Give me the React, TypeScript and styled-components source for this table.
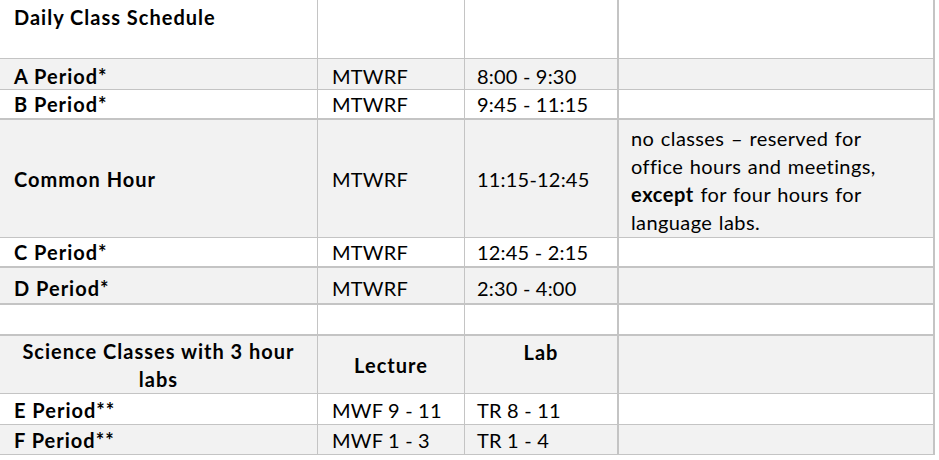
import React from "react";
import styled, { createGlobalStyle } from "styled-components";

const Global = createGlobalStyle`
  html, body { margin: 0; padding: 0; background: #ffffff; }
  body { font-family: Lato, "Open Sans", sans-serif; color: #000; }
`;

const Table = styled.table`
  border-collapse: separate;
  border-spacing: 0;
  table-layout: fixed;
  width: 935px;
  font-size: 20px;
`;

const Row = styled.tr<{ $h: number; $shade?: boolean; $bb?: number }>`
  height: ${(p) => p.$h}px;
  & > td {
    background: ${(p) => (p.$shade ? "#f2f2f2" : "#ffffff")};
    border-bottom: ${(p) => p.$bb ?? 1}px solid #c4c4c4;
  }
`;

const Cell = styled.td<{
  $col: number;
  $bold?: boolean;
  $center?: boolean;
  $valign?: "top" | "middle" | "bottom";
  $pt?: number;
  $lh?: number;
}>`
  box-sizing: border-box;
  padding: ${(p) => p.$pt ?? 0}px ${(p) => (p.$center ? 2 : 0)}px 0
    ${(p) => (p.$center ? 2 : [14, 14, 12, 12][p.$col])}px;
  border-right: ${(p) => (p.$col >= 2 ? 2 : 1)}px solid #c4c4c4;
  font-weight: ${(p) => (p.$bold ? 700 : 400)};
  letter-spacing: ${(p) => (p.$bold ? 1 : 0.2)}px;
  text-align: ${(p) => (p.$center ? "center" : "left")};
  vertical-align: ${(p) => p.$valign ?? "middle"};
  line-height: ${(p) => p.$lh ?? 24}px;
  white-space: nowrap;
`;

const Note = styled.div`
  line-height: 28px;
  letter-spacing: 0.4px;
  word-spacing: 1px;
`;

const Strong = styled.b`
  font-weight: 700;
  letter-spacing: 0.6px;
`;

type R = {
  h: number;
  shade?: boolean;
  bb?: number;
  pt?: number;
  cells: [string, string, string, string];
};

const top: R[] = [
  { h: 31, shade: true, pt: 4, cells: ["A Period*", "MTWRF", "8:00 - 9:30", ""] },
  { h: 30, bb: 2, cells: ["B Period*", "MTWRF", "9:45 - 11:15", ""] },
];

const middle: R[] = [
  { h: 30, bb: 2, cells: ["C Period*", "MTWRF", "12:45 - 2:15", ""] },
  { h: 37, shade: true, bb: 2, pt: 5, cells: ["D Period*", "MTWRF", "2:30 - 4:00", ""] },
  { h: 31, bb: 2, cells: ["", "", "", ""] },
];

const bottom: R[] = [
  { h: 31, pt: 1, cells: ["E Period**", "MWF 9 - 11", "TR 8 - 11", ""] },
  { h: 30, shade: true, cells: ["F Period**", "MWF 1 - 3", "TR 1 - 4", ""] },
];

const Plain = ({ r }: { r: R }) => (
  <Row $h={r.h} $shade={r.shade} $bb={r.bb}>
    {r.cells.map((c, i) => (
      <Cell key={i} $col={i} $bold={i === 0} $pt={r.pt}>
        {c}
      </Cell>
    ))}
  </Row>
);

export default function App() {
  return (
    <>
      <Global />
      <Table>
        <colgroup>
          <col style={{ width: 318 }} />
          <col style={{ width: 147 }} />
          <col style={{ width: 154 }} />
          <col style={{ width: 316 }} />
        </colgroup>
        <tbody>
          <Row $h={59}>
            <Cell $col={0} $bold $valign="top" $pt={5}>
              Daily Class Schedule
            </Cell>
            <Cell $col={1} />
            <Cell $col={2} />
            <Cell $col={3} />
          </Row>
          {top.map((r, i) => (
            <Plain key={"a" + i} r={r} />
          ))}
          <Row $h={118} $shade>
            <Cell $col={0} $bold>
              Common Hour
            </Cell>
            <Cell $col={1}>MTWRF</Cell>
            <Cell $col={2}>11:15-12:45</Cell>
            <Cell $col={3} $valign="top" $pt={4}>
              <Note>
                no classes – reserved for
                <br />
                office hours and meetings,
                <br />
                <Strong>except</Strong> for four hours for
                <br />
                language labs.
              </Note>
            </Cell>
          </Row>
          {middle.map((r, i) => (
            <Plain key={"b" + i} r={r} />
          ))}
          <Row $h={58} $shade>
            <Cell $col={0} $bold $center $lh={28}>
              Science Classes with 3 hour
              <br />
              labs
            </Cell>
            <Cell $col={1} $bold $center $lh={28}>
              Lecture
            </Cell>
            <Cell $col={2} $bold $center $valign="top" $pt={2} $lh={28}>
              Lab
            </Cell>
            <Cell $col={3} />
          </Row>
          {bottom.map((r, i) => (
            <Plain key={"c" + i} r={r} />
          ))}
        </tbody>
      </Table>
    </>
  );
}
